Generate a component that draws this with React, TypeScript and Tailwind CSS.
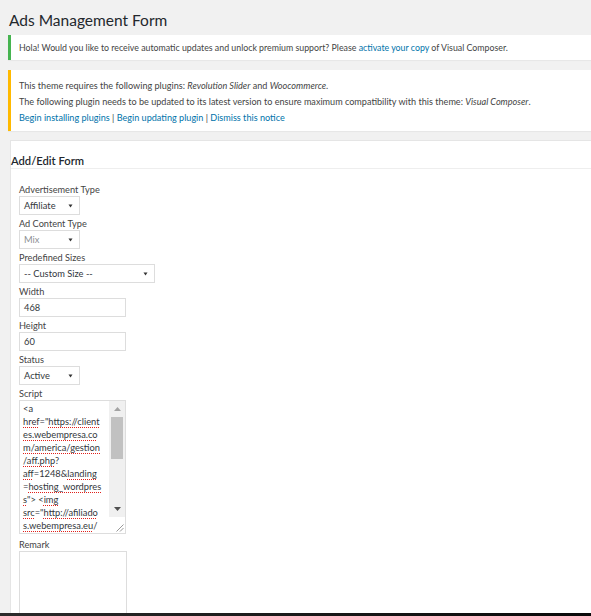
import * as React from 'react';

// ============================================================================
// SMALL PIECES
// ============================================================================

const Caret = (): React.JSX.Element => (
  <svg width="5" height="4" viewBox="0 0 5 4" className="shrink-0">
    <path d="M0.5 0.5h4L2.5 3.5z" fill="#333" />
  </svg>
);

interface SelectBoxProps {
  value: string;
  width: string;
  muted?: boolean;
}

function SelectBox({ value, width, muted = false }: SelectBoxProps): React.JSX.Element {
  return (
    <div
      className={`${width} flex h-[19px] items-center justify-between border border-[#dddddd] bg-white pl-[4px] pr-[6px] text-[9.3px] ${
        muted ? 'text-[#8c8f94]' : 'text-[#32373c]'
      }`}
    >
      <span>{value}</span>
      <Caret />
    </div>
  );
}

function TextBox({ value }: { value: string }): React.JSX.Element {
  return (
    <div className="flex h-[19px] w-[107px] items-center border border-[#dddddd] bg-white pl-[4px] text-[9.3px] text-[#32373c]">
      {value}
    </div>
  );
}

function Label({ children, className = '' }: { children: React.ReactNode; className?: string }): React.JSX.Element {
  return <div className={`h-[15px] pt-[1px] text-[9.2px] leading-[15px] text-[#444] ${className}`}>{children}</div>;
}

// each line of the script box, split into [text, misspelled] pieces
const scriptLines: Array<Array<[string, boolean]>> = [
  [['<a', false]],
  [['href', true], ['="', false], ['https://client', true]],
  [['es.webempresa.co', true]],
  [['m/america/gestion', true]],
  [['/aff.php', true], ['?', false]],
  [['aff', true], ['=1248&', false], ['landing', true]],
  [['=', false], ['hosting_wordpres', true]],
  [['s', true], ['"> <', false], ['img', true]],
  [['src', true], ['="', false], ['http://afiliado', true]],
  [['s.webempresa.eu', true], ['/', false]],
];

function ScriptBox(): React.JSX.Element {
  return (
    <div className="flex h-[134px] w-[107px] border border-[#dddddd] bg-white">
      <div className="flex-1 overflow-hidden pl-[3px] pt-[1px] text-[9.3px] leading-[13px] text-[#32373c]">
        {scriptLines.map((line, i) => (
          <div key={i} className="whitespace-nowrap">
            {line.map(([part, bad], j) =>
              bad ? (
                <span
                  key={j}
                  className="underline decoration-[#e0201b] decoration-dotted decoration-[1px] underline-offset-[2px]"
                >
                  {part}
                </span>
              ) : (
                <span key={j}>{part}</span>
              ),
            )}
          </div>
        ))}
      </div>

      {/* scrollbar + resizer */}
      <div className="flex w-[16px] flex-col">
        <div className="flex flex-1 flex-col bg-[#f0f0f0]">
          <div className="flex h-[16px] items-center justify-center">
            <svg width="7" height="4" viewBox="0 0 7 4">
              <path d="M0 4h7L3.5 0z" fill="#a3a3a3" />
            </svg>
          </div>
          <div className="mx-[2px] h-[42px] bg-[#c1c1c1]" />
          <div className="flex-1" />
          <div className="flex h-[16px] items-center justify-center">
            <svg width="7" height="4" viewBox="0 0 7 4">
              <path d="M0 0h7L3.5 4z" fill="#505050" />
            </svg>
          </div>
        </div>
        <div className="flex h-[16px] items-end justify-end bg-white pb-[1px] pr-[1px]">
          <svg width="9" height="9" viewBox="0 0 9 9">
            <path d="M8.5 1.5L1.5 8.5M8.5 5L5 8.5" stroke="#8c8c8c" strokeWidth="0.9" />
          </svg>
        </div>
      </div>
    </div>
  );
}

// ============================================================================
// PAGE
// ============================================================================

export default function App(): React.JSX.Element {
  return (
    <div className="relative h-[616px] overflow-hidden bg-[#f1f1f1] [font-family:Lato,'Open_Sans',sans-serif] text-[#444]">
      {/* page title */}
      <h1 className="h-[35px] pl-[9px] pt-[9px] text-[15.5px] font-normal leading-[22px] text-[#23282d]">
        Ads Management Form
      </h1>

      {/* update notice */}
      <div className="ml-[8px] flex h-[25px] items-center border-l-[3px] border-[#46b450] bg-white pl-[8px] text-[8.8px] shadow-[0_1px_1px_rgba(0,0,0,0.04)]">
        <p>
          Hola! Would you like to receive automatic updates and unlock premium support? Please{' '}
          <span className="text-[#0073aa]">activate your copy</span> of Visual Composer.
        </p>
      </div>

      {/* plugins notice */}
      <div className="ml-[8px] mt-[10px] h-[61px] border-l-[3px] border-[#ffb900] bg-white pl-[8px] pt-[8px] text-[9.1px] leading-[16px] shadow-[0_1px_1px_rgba(0,0,0,0.04)]">
        <p>
          This theme requires the following plugins: <em>Revolution Slider</em> and <em>Woocommerce</em>.
        </p>
        <p>
          The following plugin needs to be updated to its latest version to ensure maximum compatibility with this theme:{' '}
          <em>Visual Composer</em>.
        </p>
        <p>
          <span className="text-[#0073aa]">Begin installing plugins</span> |{' '}
          <span className="text-[#0073aa]">Begin updating plugin</span> |{' '}
          <span className="text-[#0073aa]">Dismiss this notice</span>
        </p>
      </div>

      {/* form panel */}
      <div className="ml-[10px] mt-[9px] h-[480px] border-l border-t border-[#e5e5e5] bg-white">
        <h2 className="border-b border-[#eeeeee] pt-[13px] text-[11.2px] font-semibold leading-[14px] text-[#23282d]">
          Add/Edit Form
        </h2>

        <div className="flex flex-col items-start pl-[8px] pt-[12px]">
          <Label>Advertisement Type</Label>
          <SelectBox value="Affiliate" width="w-[61px]" />

          <Label>Ad Content Type</Label>
          <SelectBox value="Mix" width="w-[61px]" muted />

          <Label>Predefined Sizes</Label>
          <SelectBox value="-- Custom Size --" width="w-[136px]" />

          <Label>Width</Label>
          <TextBox value="468" />

          <Label>Height</Label>
          <TextBox value="60" />

          <Label>Status</Label>
          <SelectBox value="Active" width="w-[61px]" />

          <Label>Script</Label>
          <ScriptBox />

          <Label className="mt-[2px]">Remark</Label>
          <div className="h-[80px] w-[108px] border border-[#dddddd] bg-white" />
        </div>
      </div>

      {/* taskbar strip at the very bottom */}
      <div className="absolute bottom-0 left-0 h-[3px] w-full bg-gradient-to-r from-[#2b2b2b] to-[#0a0a0a]" />
    </div>
  );
}
